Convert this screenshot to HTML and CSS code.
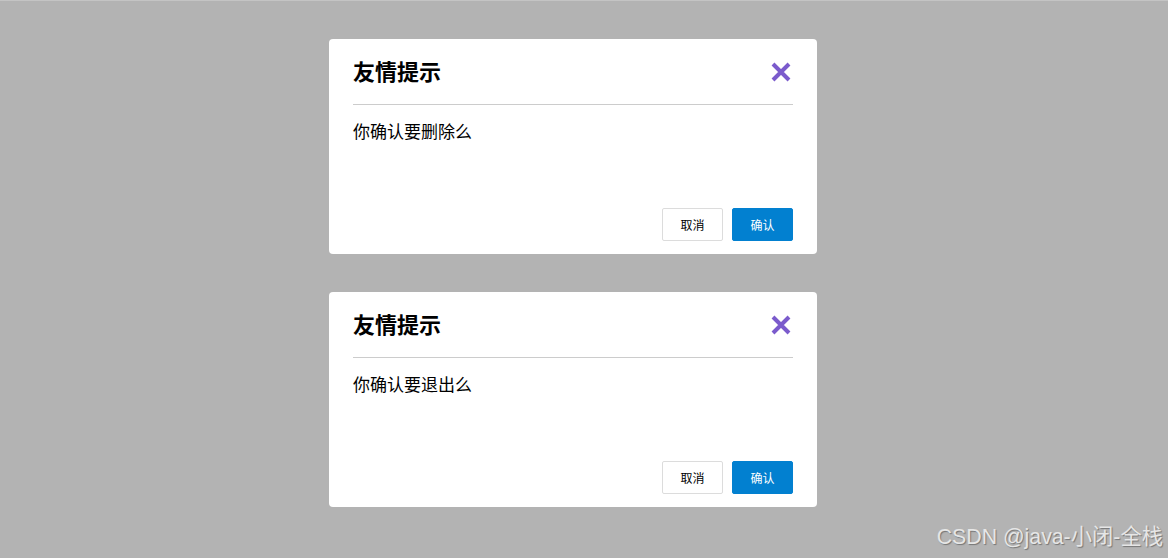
FILE: index.html
```html
<!DOCTYPE html>
<html lang="zh">
<head>
<meta charset="utf-8">
<link rel="stylesheet" href="styles.css">
</head>
<body>
<div class="page">
  <div class="dialog">
    <div class="dialog-header">
      <h2 class="dialog-title">友情提示</h2>
      <svg class="close" width="22" height="22" viewBox="0 0 22 22"><path d="M3 3L19 19M19 3L3 19" stroke="#7b5bcc" stroke-width="4" stroke-linecap="butt" fill="none"/></svg>
    </div>
    <div class="dialog-body">你确认要删除么</div>
    <div class="dialog-footer">
      <button class="btn btn-cancel">取消</button>
      <button class="btn btn-ok">确认</button>
    </div>
  </div>
  <div class="dialog">
    <div class="dialog-header">
      <h2 class="dialog-title">友情提示</h2>
      <svg class="close" width="22" height="22" viewBox="0 0 22 22"><path d="M3 3L19 19M19 3L3 19" stroke="#7b5bcc" stroke-width="4" stroke-linecap="butt" fill="none"/></svg>
    </div>
    <div class="dialog-body">你确认要退出么</div>
    <div class="dialog-footer">
      <button class="btn btn-cancel">取消</button>
      <button class="btn btn-ok">确认</button>
    </div>
  </div>
</div>
<div class="watermark">CSDN @java-小闭-全栈</div>
</body>
</html>
```
FILE: styles.css
```css
html, body {
  margin: 0;
  padding: 0;
  height: 100%;
}
body {
  background: #b3b3b3;
  border-top: 1px solid #c4c4c4;
  box-sizing: border-box;
  font-family: "Noto Sans CJK SC", "Noto Sans", sans-serif;
  overflow: hidden;
  position: relative;
}
.page {
  padding: 38px 0 0 329px;
  display: flex;
  flex-direction: column;
  gap: 38px;
}
.dialog {
  width: 488px;
  height: 215px;
  background: #fff;
  border-radius: 4px;
  padding: 0 24px 13px;
  box-sizing: border-box;
  display: flex;
  flex-direction: column;
}
.dialog-header {
  height: 65px;
  flex: none;
  display: flex;
  align-items: center;
  justify-content: space-between;
  border-bottom: 1px solid #cccccc;
}
.dialog-title {
  margin: 0 0 3px;
  font-size: 22px;
  font-weight: bold;
  color: #000;
  line-height: 1;
}
.close {
  margin-right: 1px;
}
.dialog-body {
  flex: 1;
  padding-top: 16px;
  font-size: 17px;
  line-height: 20px;
  color: #000;
}
.dialog-footer {
  display: flex;
  justify-content: flex-end;
  gap: 9px;
}
.btn {
  width: 61px;
  height: 33px;
  border-radius: 2px;
  font-family: "Noto Sans CJK SC", sans-serif;
  font-size: 12px;
  padding: 0;
  cursor: pointer;
}
.btn-cancel {
  background: #fff;
  border: 1px solid #dcdcdc;
  color: #000;
}
.btn-ok {
  background: #0280d0;
  border: 1px solid #0280d0;
  color: #fff;
}
.watermark {
  position: absolute;
  right: 5px;
  bottom: 8px;
  font-family: "Liberation Sans", "Noto Sans CJK SC", sans-serif;
  font-size: 21.3px;
  color: #e6e6e6;
  text-shadow: 1px 1px 1px rgba(0,0,0,0.35);
}
```
